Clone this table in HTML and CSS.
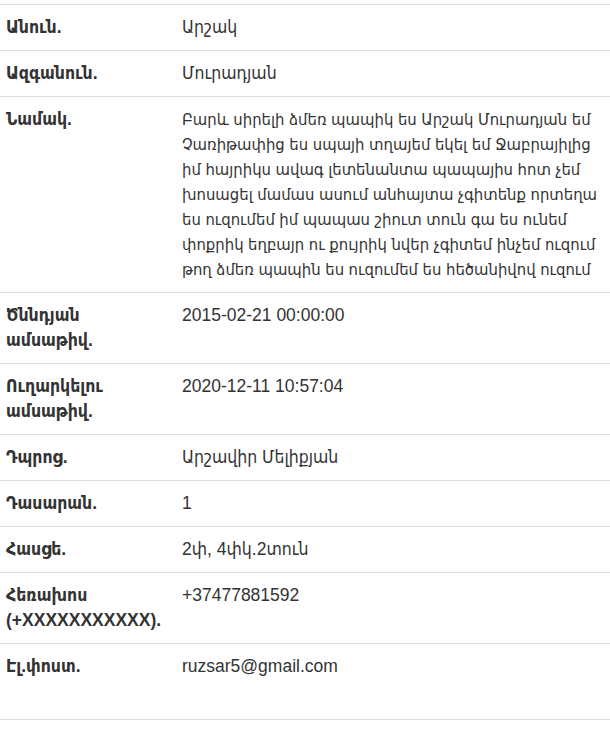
FILE: index.html
```html
<!DOCTYPE html>
<html lang="hy">
<head>
<meta charset="utf-8">
<title>Նամակ</title>
<link rel="stylesheet" href="styles.css">
</head>
<body>
<table class="info">
  <tr><th>Անուն.</th><td>Արշակ</td></tr>
  <tr><th>Ազգանուն.</th><td>Մուրադյան</td></tr>
  <tr><th>Նամակ.</th><td class="letter">Բարև սիրելի ձմեռ պապիկ ես Արշակ Մուրադյան եմ Չառիթափից ես սպայի տղայեմ եկել եմ Ջաբրայիլից իմ հայրիկս ավագ լետենանտա պապայիս հոտ չեմ խոսացել մամաս ասում անհայտա չգիտենք որտեղա ես ուզումեմ իմ պապաս շիուտ տուն գա ես ունեմ փոքրիկ եղբայր ու քույրիկ նվեր չգիտեմ ինչեմ ուզում թող ձմեռ պապին ես ուզումեմ ես հեծանիվով ուզում</td></tr>
  <tr><th>Ծննդյան ամսաթիվ.</th><td>2015-02-21 00:00:00</td></tr>
  <tr><th>Ուղարկելու ամսաթիվ.</th><td>2020-12-11 10:57:04</td></tr>
  <tr><th>Դպրոց.</th><td>Արշավիր Մելիքյան</td></tr>
  <tr><th>Դասարան.</th><td>1</td></tr>
  <tr><th>Հասցե.</th><td>2փ, 4փկ.2տուն</td></tr>
  <tr><th>Հեռախոս (+XXXXXXXXXXX).</th><td>+37477881592</td></tr>
  <tr class="last"><th>Էլ.փոստ.</th><td>ruzsar5@gmail.com</td></tr>
</table>
</body>
</html>
```
FILE: styles.css
```css
html, body {
  margin: 0;
  background: #fff;
}
body {
  padding-top: 4px;
  font-family: "Liberation Sans", "DejaVu Sans Condensed", "DejaVu Sans", sans-serif;
  font-size: 17.5px;
  line-height: 25px;
  color: #333;
}
.info {
  width: 100%;
  border-collapse: collapse;
}
.info th,
.info td {
  border-top: 1px solid #ddd;
  vertical-align: top;
  text-align: left;
}
.info th {
  width: 156px;
  padding: 10px 10px 10px 6px;
  font-weight: bold;
}
.info td {
  padding: 10px 2px 10px 10px;
  font-weight: normal;
}
.info td.letter {
  font-size: 16.5px;
}
.info .last th,
.info .last td {
  border-bottom: 1px solid #ddd;
  padding-bottom: 40px;
}
```
